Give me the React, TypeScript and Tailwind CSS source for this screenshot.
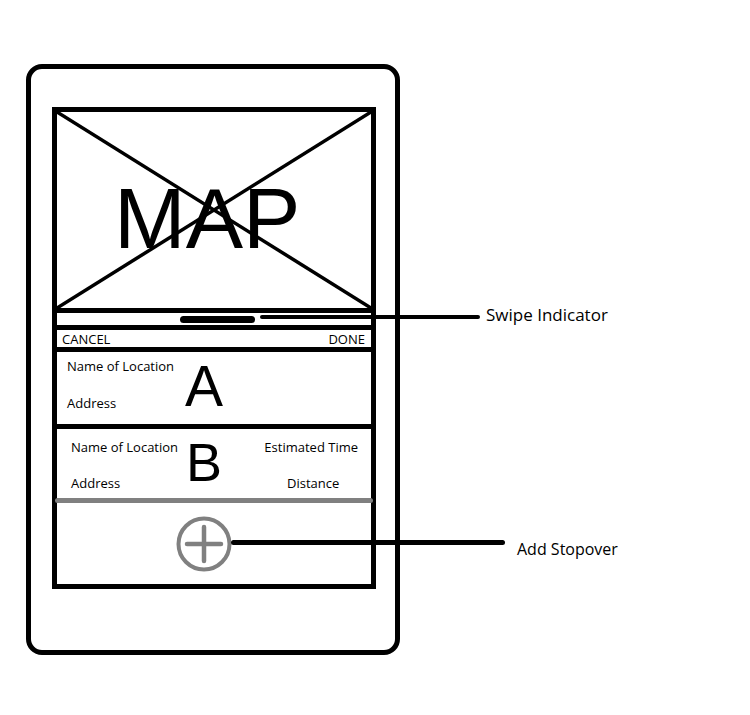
import React from "react";

const small = "font-['Open_Sans',sans-serif] text-[13px] leading-[18px] text-black";
const big = "font-['Liberation_Sans',Arial,sans-serif] leading-none text-black";

function MapArea() {
    return (
        <div className="relative h-[201px] border-b-[5px] border-black">
            <svg
                className="absolute inset-0 h-full w-full"
                viewBox="0 0 314 196"
                preserveAspectRatio="none"
            >
                <line x1="0" y1="0" x2="314" y2="196" stroke="black" strokeWidth="3.5" />
                <line x1="314" y1="0" x2="0" y2="196" stroke="black" strokeWidth="3.5" />
            </svg>
            <div className={`${big} pl-[57px] pt-[63px] text-[86px]`}>MAP</div>
        </div>
    );
}

function PlusButton() {
    return (
        <svg width="56" height="56" viewBox="0 0 56 56" fill="none">
            <circle cx="28" cy="28" r="25.5" stroke="#808080" strokeWidth="4" />
            <line x1="11" y1="28" x2="45" y2="28" stroke="#808080" strokeWidth="4.5" strokeLinecap="round" />
            <line x1="28" y1="11" x2="28" y2="45" stroke="#808080" strokeWidth="4.5" strokeLinecap="round" />
        </svg>
    );
}

export default function App() {
    return (
        <div className="relative h-[715px] w-[750px] overflow-hidden bg-white pl-[26px] pt-[64px]">
            {/* phone */}
            <div className="h-[591px] w-[374px] rounded-[16px] border-[5px] border-black pl-[21px] pt-[38px]">
                <div className="flex h-[482px] w-[324px] flex-col border-[5px] border-black">
                    <MapArea />

                    <div className="flex h-[17px] items-center border-b-[5px] border-black">
                        <div className="ml-[123px] h-[7px] w-[75px] rounded-full bg-black" />
                    </div>

                    <div className={`flex h-[22px] justify-between border-b-[5px] border-black pl-[5px] pr-[6px] ${small} leading-[15px]`}>
                        <span>CANCEL</span>
                        <span>DONE</span>
                    </div>

                    <div className="flex h-[77px] border-b-[5px] border-black">
                        <div className={`flex w-[128px] flex-col gap-[19px] pl-[10px] pt-[5px] ${small}`}>
                            <span>Name of Location</span>
                            <span>Address</span>
                        </div>
                        <div className={`${big} pt-[6px] text-[57px]`}>A</div>
                    </div>

                    <div className="flex h-[69px]">
                        <div className={`flex w-[129px] flex-col gap-[18px] pl-[14px] pt-[9px] ${small}`}>
                            <span>Name of Location</span>
                            <span>Address</span>
                        </div>
                        <div className={`${big} pt-[6px] text-[54px]`}>B</div>
                        <div className={`ml-auto flex flex-col items-center gap-[18px] pr-[13px] pt-[9px] ${small}`}>
                            <span>Estimated Time</span>
                            <span className="pl-[4px]">Distance</span>
                        </div>
                    </div>
                    <div className="-mx-[2px] h-[5px] rounded-full bg-[#808080]" />

                    <div className="flex flex-1 items-center pl-[119px]">
                        <PlusButton />
                    </div>
                </div>
            </div>

            {/* callouts */}
            <div className="absolute left-[260px] top-[315px] h-[4px] w-[220px] rounded-full bg-black" />
            <div className="absolute left-[486px] top-[305px] font-['Open_Sans',sans-serif] text-[17px] leading-[20px] text-black">
                Swipe Indicator
            </div>
            <div className="absolute left-[231px] top-[540px] h-[5px] w-[274px] rounded-full bg-black" />
            <div className="absolute left-[517px] top-[539px] font-['Open_Sans',sans-serif] text-[16px] leading-[20px] text-black">
                Add Stopover
            </div>
        </div>
    );
}
